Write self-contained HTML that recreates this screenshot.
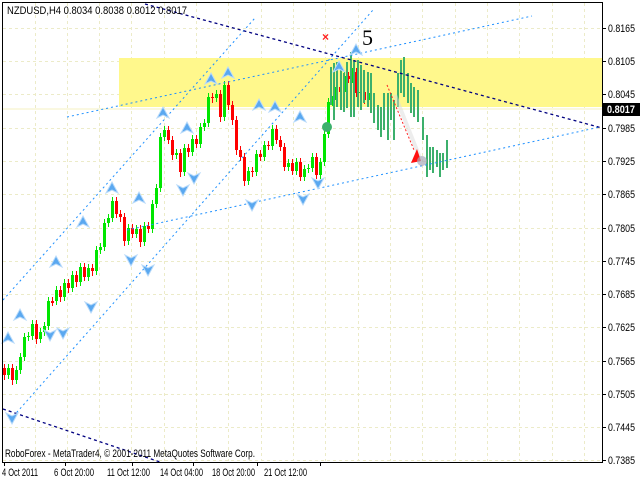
<!DOCTYPE html>
<html><head><meta charset="utf-8"><style>
html,body{margin:0;padding:0;background:#fff;width:640px;height:480px;overflow:hidden}
svg{display:block}
text{font-family:"Liberation Sans",sans-serif;font-size:11px;fill:#000}
</style></head><body>
<svg width="640" height="480" xmlns="http://www.w3.org/2000/svg">
<rect x="0" y="0" width="640" height="480" fill="#fff"/>
<g stroke="#ecebc8" stroke-width="1" stroke-dasharray="3,3">
<path d="M35.5 3V461M67.5 3V461M99.5 3V461M131.5 3V461M164.5 3V461M196.5 3V461M228.5 3V461M261.5 3V461M293.5 3V461M325.5 3V461M358.5 3V461M390.5 3V461M422.5 3V461M455.5 3V461M487.5 3V461M519.5 3V461M552.5 3V461M584.5 3V461"/>
<path d="M3 28.5H601M3 61.5H601M3 94.5H601M3 128.5H601M3 161.5H601M3 194.5H601M3 228.5H601M3 261.5H601M3 294.5H601M3 327.5H601M3 361.5H601M3 394.5H601M3 427.5H601M3 460.5H601"/>
</g>
<rect x="119" y="58" width="483" height="49" fill="#fff88c"/>
<line x1="3" y1="109" x2="602" y2="109" stroke="#f4f2c0" stroke-width="1"/>
<g fill="#00e600">
<path stroke="#00e600" stroke-width="1" d="M8.5 364V379M16.5 366V384M20.5 353V374M24.5 333V361M28.5 332V341M32.5 320V340M40.5 328V343M44.5 322V336M48.5 297V330M56.5 286V305M64.5 279V301M72.5 271V292M80.5 263V286M88.5 264V281M96.5 246V275M100.5 243V254M104.5 219V251M108.5 214V227M112.5 197V222M128.5 224V245M136.5 225V238M144.5 222V246M152.5 200V233M156.5 184V208M160.5 133V192M164.5 126V141M176.5 149V159M184.5 144V176M192.5 135V156M200.5 123V148M204.5 119V131M208.5 93V127M216.5 90V102M224.5 81V121M248.5 167V185M256.5 150V176M264.5 141V161M272.5 125V150M288.5 159V171M296.5 158V175M304.5 165V181M308.5 164V173M312.5 153V172M320.5 158V179M324.5 130V166M328.5 98V138M332.5 96V106M336.5 83V104M344.5 72V96M352.5 68V83M360.5 88V97M368.5 89V104"/>
<rect x="7" y="368" width="3" height="7"/><rect x="15" y="370" width="3" height="10"/><rect x="19" y="357" width="3" height="13"/><rect x="23" y="337" width="3" height="20"/><rect x="27" y="336" width="3" height="1"/><rect x="31" y="324" width="3" height="12"/><rect x="39" y="332" width="3" height="7"/><rect x="43" y="326" width="3" height="6"/><rect x="47" y="301" width="3" height="25"/><rect x="55" y="290" width="3" height="11"/><rect x="63" y="283" width="3" height="14"/><rect x="71" y="275" width="3" height="13"/><rect x="79" y="267" width="3" height="15"/><rect x="87" y="268" width="3" height="9"/><rect x="95" y="250" width="3" height="21"/><rect x="99" y="247" width="3" height="3"/><rect x="103" y="223" width="3" height="24"/><rect x="107" y="218" width="3" height="5"/><rect x="111" y="201" width="3" height="17"/><rect x="127" y="228" width="3" height="13"/><rect x="135" y="229" width="3" height="5"/><rect x="143" y="226" width="3" height="16"/><rect x="151" y="204" width="3" height="25"/><rect x="155" y="188" width="3" height="16"/><rect x="159" y="137" width="3" height="51"/><rect x="163" y="130" width="3" height="7"/><rect x="175" y="153" width="3" height="2"/><rect x="183" y="148" width="3" height="24"/><rect x="191" y="139" width="3" height="13"/><rect x="199" y="127" width="3" height="17"/><rect x="203" y="123" width="3" height="4"/><rect x="207" y="97" width="3" height="26"/><rect x="215" y="94" width="3" height="4"/><rect x="223" y="85" width="3" height="32"/><rect x="247" y="171" width="3" height="10"/><rect x="255" y="154" width="3" height="18"/><rect x="263" y="145" width="3" height="12"/><rect x="271" y="129" width="3" height="17"/><rect x="287" y="163" width="3" height="4"/><rect x="295" y="162" width="3" height="9"/><rect x="303" y="169" width="3" height="8"/><rect x="307" y="168" width="3" height="1"/><rect x="311" y="157" width="3" height="11"/><rect x="319" y="162" width="3" height="13"/><rect x="323" y="134" width="3" height="28"/><rect x="327" y="102" width="3" height="32"/><rect x="331" y="100" width="3" height="2"/><rect x="335" y="87" width="3" height="13"/><rect x="343" y="76" width="3" height="16"/><rect x="351" y="72" width="3" height="7"/><rect x="359" y="92" width="3" height="1"/><rect x="367" y="93" width="3" height="7"/>
</g>
<g fill="#ff0000">
<path stroke="#ff0000" stroke-width="1" d="M4.5 364V380M12.5 364V385M36.5 320V344M52.5 297V306M60.5 286V302M68.5 279V293M76.5 271V287M84.5 263V281M92.5 264V276M116.5 197V218M120.5 210V222M124.5 213V246M132.5 224V238M140.5 225V247M148.5 222V233M168.5 126V144M172.5 136V160M180.5 149V177M188.5 144V157M196.5 135V148M212.5 93V103M220.5 90V122M228.5 81V110M232.5 101V125M236.5 116V155M240.5 146V161M244.5 153V186M252.5 167V177M260.5 150V161M268.5 141V150M276.5 125V144M280.5 136V151M284.5 143V171M292.5 159V175M300.5 158V181M316.5 153V179M340.5 83V96M348.5 72V83M356.5 68V97M364.5 88V104"/>
<rect x="3" y="368" width="3" height="7"/><rect x="11" y="368" width="3" height="12"/><rect x="35" y="324" width="3" height="15"/><rect x="51" y="301" width="3" height="2"/><rect x="59" y="290" width="3" height="7"/><rect x="67" y="283" width="3" height="5"/><rect x="75" y="275" width="3" height="7"/><rect x="83" y="267" width="3" height="10"/><rect x="91" y="268" width="3" height="3"/><rect x="115" y="201" width="3" height="13"/><rect x="119" y="214" width="3" height="3"/><rect x="123" y="217" width="3" height="24"/><rect x="131" y="228" width="3" height="6"/><rect x="139" y="229" width="3" height="13"/><rect x="147" y="226" width="3" height="3"/><rect x="167" y="130" width="3" height="10"/><rect x="171" y="140" width="3" height="15"/><rect x="179" y="153" width="3" height="19"/><rect x="187" y="148" width="3" height="4"/><rect x="195" y="139" width="3" height="5"/><rect x="211" y="97" width="3" height="1"/><rect x="219" y="94" width="3" height="23"/><rect x="227" y="85" width="3" height="20"/><rect x="231" y="105" width="3" height="15"/><rect x="235" y="120" width="3" height="30"/><rect x="239" y="150" width="3" height="7"/><rect x="243" y="157" width="3" height="24"/><rect x="251" y="171" width="3" height="1"/><rect x="259" y="154" width="3" height="3"/><rect x="267" y="145" width="3" height="1"/><rect x="275" y="129" width="3" height="11"/><rect x="279" y="140" width="3" height="7"/><rect x="283" y="147" width="3" height="20"/><rect x="291" y="163" width="3" height="8"/><rect x="299" y="162" width="3" height="15"/><rect x="315" y="157" width="3" height="18"/><rect x="339" y="87" width="3" height="5"/><rect x="347" y="76" width="3" height="3"/><rect x="355" y="72" width="3" height="21"/><rect x="363" y="92" width="3" height="8"/>
</g>
<path stroke="#3cb06c" stroke-width="2" fill="none" d="M331 67V105M334 63V120M337 62V107M341 68V110M344 73V112M347 62V108M351 52V117M354 60V117M358 60V107M361 65V110M364 70V103M368 72V107M371 73V113M374 93V123M378 105V130M381 107V137M384 93V130M388 93V140M391 93V120M394 100V140M398 73V107M401 60V93M404 57V97M408 73V103M411 83V113M414 87V117M418 90V122M423 117V140M427 135V177M430 147V170M433 147V173M437 150V167M440 153V177M443 153V170M447 140V168"/>
<g fill="none" stroke="#1e90ff" stroke-width="1" stroke-dasharray="2,3">
<line x1="3" y1="300" x2="255" y2="18"/>
<line x1="10" y1="420" x2="373" y2="10"/>
<line x1="127" y1="230" x2="600" y2="127"/>
<line x1="67" y1="117" x2="532" y2="16"/>
</g>
<g fill="none" stroke="#000080" stroke-width="1.3" stroke-dasharray="3,3">
<line x1="145" y1="4" x2="602" y2="128"/>
<line x1="3" y1="409" x2="160" y2="462"/>
</g>
<g fill="#5aa8f0" stroke="#b8dafa" stroke-width="1">
<path d="M20 309L26 320L20 317L14 320Z M8 332L14 343L8 340L2 343Z M56 256L62 267L56 264L50 267Z M83 216L89 227L83 224L77 227Z M112 182L118 193L112 190L106 193Z M139 192L145 203L139 200L133 203Z M163 107L169 118L163 115L157 118Z M187 122L193 133L187 130L181 133Z M211 73L217 84L211 81L205 84Z M228 67L234 78L228 75L222 78Z M259 99L265 110L259 107L253 110Z M275 101L281 112L275 109L269 112Z M300 111L306 122L300 119L294 122Z M356 44L362 55L356 52L350 55Z M339 61L345 72L339 69L333 72Z"/>
<path d="M50 341L56 330L50 333L44 330Z M63 339L69 328L63 331L57 328Z M91 313L97 302L91 305L85 302Z M131 266L137 255L131 258L125 255Z M148 276L154 265L148 268L142 265Z M183 196L189 185L183 188L177 185Z M194 184L200 173L194 176L188 173Z M252 211L258 200L252 203L246 200Z M303 205L309 194L303 197L297 194Z M318 189L324 178L318 181L312 178Z M12 424L18 413L12 416L6 413Z"/>
</g>
<text x="322" y="41" style="fill:#ff2020;font-size:12px;font-weight:bold">×</text>
<text x="362" y="45" style="font-family:'Liberation Serif',serif;font-size:22px">5</text>
<line x1="387" y1="85" x2="414" y2="150" stroke="#ff2020" stroke-width="1" stroke-dasharray="2,2"/>
<line x1="395" y1="95" x2="420" y2="158" stroke="#ddd" stroke-width="4" opacity="0.5"/>
<polygon points="411,163 421,161 417,149" fill="#ff1010"/>
<circle cx="422" cy="161" r="5" fill="#aab" opacity="0.7"/>
<circle cx="327" cy="127" r="5" fill="#3cb06c"/>
<rect x="2.5" y="2.5" width="600" height="460" fill="none" stroke="#000" stroke-width="1"/>
<path stroke="#000" d="M602 28.5H606M602 61.5H606M602 94.5H606M602 128.5H606M602 161.5H606M602 194.5H606M602 228.5H606M602 261.5H606M602 294.5H606M602 327.5H606M602 361.5H606M602 394.5H606M602 427.5H606M602 460.5H606M4.5 462V466M65.5 462V466M132.5 462V466M193.5 462V466M257.5 462V466M320.5 462V466"/>
<g>
<text x="608" y="32" textLength="27" lengthAdjust="spacingAndGlyphs">0.8165</text>
<text x="608" y="65" textLength="27" lengthAdjust="spacingAndGlyphs">0.8105</text>
<text x="608" y="98" textLength="27" lengthAdjust="spacingAndGlyphs">0.8045</text>
<text x="608" y="132" textLength="27" lengthAdjust="spacingAndGlyphs">0.7985</text>
<text x="608" y="165" textLength="27" lengthAdjust="spacingAndGlyphs">0.7925</text>
<text x="608" y="198" textLength="27" lengthAdjust="spacingAndGlyphs">0.7865</text>
<text x="608" y="232" textLength="27" lengthAdjust="spacingAndGlyphs">0.7805</text>
<text x="608" y="265" textLength="27" lengthAdjust="spacingAndGlyphs">0.7745</text>
<text x="608" y="298" textLength="27" lengthAdjust="spacingAndGlyphs">0.7685</text>
<text x="608" y="331" textLength="27" lengthAdjust="spacingAndGlyphs">0.7625</text>
<text x="608" y="365" textLength="27" lengthAdjust="spacingAndGlyphs">0.7565</text>
<text x="608" y="398" textLength="27" lengthAdjust="spacingAndGlyphs">0.7505</text>
<text x="608" y="431" textLength="27" lengthAdjust="spacingAndGlyphs">0.7445</text>
<text x="608" y="464" textLength="27" lengthAdjust="spacingAndGlyphs">0.7385</text>
</g>
<rect x="603" y="103" width="37" height="13" fill="#000"/>
<text x="607" y="113" style="fill:#fff;font-weight:bold" textLength="28" lengthAdjust="spacingAndGlyphs">0.8017</text>
<text x="7" y="14" textLength="180" lengthAdjust="spacingAndGlyphs">NZDUSD,H4  0.8034 0.8038 0.8012 0.8017</text>
<text x="5" y="457" textLength="250" lengthAdjust="spacingAndGlyphs">RoboForex - MetaTrader4, © 2001-2011 MetaQuotes Software Corp.</text>
<text x="2" y="476" textLength="36" lengthAdjust="spacingAndGlyphs">4 Oct 2011</text>
<text x="54" y="476" textLength="40" lengthAdjust="spacingAndGlyphs">6 Oct 20:00</text>
<text x="107" y="476" textLength="43" lengthAdjust="spacingAndGlyphs">11 Oct 12:00</text>
<text x="160" y="476" textLength="43" lengthAdjust="spacingAndGlyphs">14 Oct 04:00</text>
<text x="212" y="476" textLength="43" lengthAdjust="spacingAndGlyphs">18 Oct 20:00</text>
<text x="264" y="476" textLength="43" lengthAdjust="spacingAndGlyphs">21 Oct 12:00</text>
</svg>
</body></html>
